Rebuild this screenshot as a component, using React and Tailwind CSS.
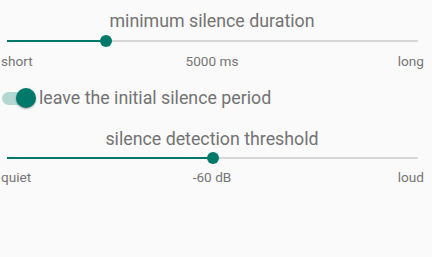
import React from "react";

const teal = "bg-[#00796b]";

// simple material-ish slider, value is 0..1
const Slider = ({ value, height }) => {
  return (
    <div className={`relative ml-[7px] mr-[6px] flex items-center ${height}`}>
      <div className="h-[2px] w-full bg-[#d7d7d7]" />
      <div
        className={`absolute left-0 h-[2px] ${teal}`}
        style={{ width: `${value * 100}%` }}
      />
      <div
        className={`absolute h-[12px] w-[12px] -translate-x-1/2 rounded-full ${teal}`}
        style={{ left: `${value * 100}%` }}
      />
    </div>
  );
};

const Labels = ({ left, mid, right }) => (
  <div className="mt-[4px] grid grid-cols-3 text-[13.6px] leading-[16px] text-[#757575]">
    <span className="pl-[1px]">{left}</span>
    <span className="text-center">{mid}</span>
    <span className="text-right">{right}</span>
  </div>
);

const Title = ({ children, className = "" }) => (
  <div className={`text-center text-[17.8px] leading-[24px] text-[#737373] ${className}`}>
    {children}
  </div>
);

export default function App() {
  return (
    <div
      className="h-[257px] w-[432px] bg-[#fafafa] pr-2"
      style={{ fontFamily: "Roboto, 'Liberation Sans', sans-serif" }}
    >
      <Title className="pt-[9px]">minimum silence duration</Title>
      <Slider value={0.24} height="h-4" />
      <Labels left="short" mid="5000 ms" right="long" />

      <div className="mt-[17px] flex h-[24px] items-center">
        <div className="relative ml-[2px] flex h-[20px] w-[34px] items-center">
          <div className="h-[13px] w-[31px] rounded-full bg-[#b2d8d4]" />
          <div
            className={`absolute right-0 h-[20px] w-[20px] rounded-full ${teal} shadow-[0_1px_2px_rgba(0,0,0,0.35)]`}
          />
        </div>
        <span className="ml-[3px] text-[17.8px] leading-[24px] text-[#737373]">
          leave the initial silence period
        </span>
      </div>

      <Title className="mt-[17px]">silence detection threshold</Title>
      <Slider value={0.5} height="h-[14px]" />
      <Labels left="quiet" mid="-60 dB" right="loud" />
    </div>
  );
}
